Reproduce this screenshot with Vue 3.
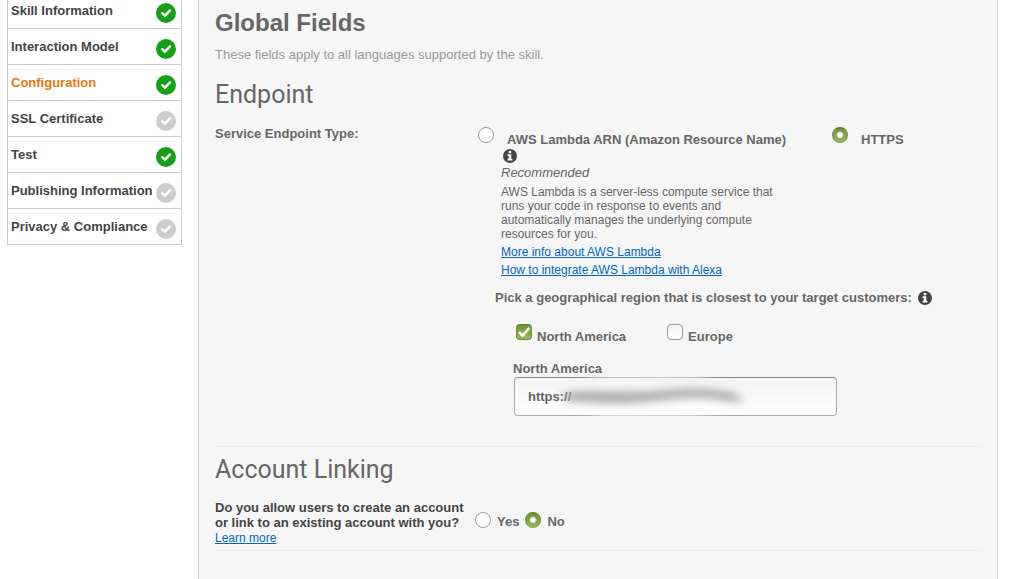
<script setup>
import { ref } from 'vue'

const steps = [
  { name: 'Skill Information', done: true },
  { name: 'Interaction Model', done: true },
  { name: 'Configuration', done: true, active: true },
  { name: 'SSL Certificate', done: false },
  { name: 'Test', done: true },
  { name: 'Publishing Information', done: false },
  { name: 'Privacy & Compliance', done: false },
]
const endpointType = ref('https')
const northAmerica = ref(true)
const europe = ref(false)
const url = ref('https://')
const linking = ref('no')
</script>

<template>
  <div class="page">
    <nav class="steps" aria-label="Skill setup">
      <ul>
        <li v-for="s in steps" :key="s.name">
          <a href="#" :class="{ active: s.active }">{{ s.name }}</a>
          <svg class="tick" :class="{ done: s.done }" viewBox="0 0 20 20" aria-hidden="true">
            <circle cx="10" cy="10" r="10" />
            <path d="M6.2 10.2 8.9 12.7 14 7.4" />
          </svg>
        </li>
      </ul>
    </nav>

    <main class="panel">
      <h1>Global Fields</h1>
      <p class="note">These fields apply to all languages supported by the skill.</p>

      <section class="endpoint">
        <h2>Endpoint</h2>
        <div class="type-row">
          <span id="type-label" class="strong">Service Endpoint Type:</span>
          <div class="types" role="radiogroup" aria-labelledby="type-label">
            <div class="type lambda">
              <input id="type-lambda" v-model="endpointType" class="radio" type="radio" name="type" value="lambda" />
              <div class="details">
                <label for="type-lambda" class="strong">AWS Lambda ARN (Amazon Resource Name)</label>
                <svg class="info" viewBox="0 0 14 14" aria-hidden="true">
                  <circle cx="7" cy="7" r="7" />
                  <path d="M5.7 2h2.6v2.3H5.7zM4.6 5.2h3.7v4.6h1.1v1.8H4.6V9.8h1.1V7H4.6z" />
                </svg>
                <em>Recommended</em>
                <p>AWS Lambda is a server-less compute service that runs your code in response to events and automatically manages the underlying compute resources for you.</p>
                <a href="#">More info about AWS Lambda</a>
                <a href="#">How to integrate AWS Lambda with Alexa</a>
              </div>
            </div>
            <div class="type">
              <input id="type-https" v-model="endpointType" class="radio" type="radio" name="type" value="https" />
              <div class="details">
                <label for="type-https" class="strong">HTTPS</label>
              </div>
            </div>
          </div>
        </div>

        <div class="region">
          <p class="strong question">
            Pick a geographical region that is closest to your target customers:
            <svg class="info" viewBox="0 0 14 14" aria-hidden="true">
              <circle cx="7" cy="7" r="7" />
              <path d="M5.7 2h2.6v2.3H5.7zM4.6 5.2h3.7v4.6h1.1v1.8H4.6V9.8h1.1V7H4.6z" />
            </svg>
          </p>
          <div class="checks">
            <div class="check">
              <span class="box">
                <input id="na" v-model="northAmerica" type="checkbox" />
                <svg v-if="northAmerica" viewBox="0 0 16 16" aria-hidden="true"><path d="M3 8 6.6 11.6 13.4 3.8" /></svg>
              </span>
              <label for="na" class="strong">North America</label>
            </div>
            <div class="check">
              <span class="box">
                <input id="eu" v-model="europe" type="checkbox" />
                <svg v-if="europe" viewBox="0 0 16 16" aria-hidden="true"><path d="M3 8 6.6 11.6 13.4 3.8" /></svg>
              </span>
              <label for="eu" class="strong">Europe</label>
            </div>
          </div>
          <div class="url">
            <label for="na-url" class="strong">North America</label>
            <div class="field">
              <input id="na-url" v-model="url" type="text" />
              <svg class="smudge" viewBox="0 0 240 44" aria-hidden="true">
                <defs>
                  <filter id="soft" x="-20%" y="-100%" width="140%" height="300%"><feGaussianBlur stdDeviation="6 4" /></filter>
                  <filter id="wide" x="-20%" y="-100%" width="140%" height="300%"><feGaussianBlur stdDeviation="10 1" /></filter>
                </defs>
                <path class="veil" filter="url(#wide)" d="M80 3L190 3.1M80 41L190 41.1" />
                <path class="ink" filter="url(#soft)" d="M50 18C80 16 110 19 140 17S195 12 224 20L228 30C200 22 170 23 140 27S80 29 52 27Z" />
              </svg>
            </div>
          </div>
        </div>
      </section>

      <section class="account">
        <h2>Account Linking</h2>
        <div class="link-row">
          <div class="ask">
            <span id="link-label">Do you allow users to create an account or link to an existing account with you?</span>
            <a href="#">Learn more</a>
          </div>
          <div class="answers" role="radiogroup" aria-labelledby="link-label">
            <input id="yes" v-model="linking" class="radio" type="radio" name="linking" value="yes" />
            <label for="yes" class="strong">Yes</label>
            <input id="no" v-model="linking" class="radio" type="radio" name="linking" value="no" />
            <label for="no" class="strong">No</label>
          </div>
        </div>
      </section>
    </main>
  </div>
</template>

<style>
body {
  background: #fff;
}
</style>

<style scoped>
.page {
  display: flex;
  align-items: flex-start;
  min-height: 100vh;
  padding: 0 12px 0 7px;
  box-sizing: border-box;
  gap: 16px;
  font: 13px/15px "Liberation Sans", Arial, sans-serif;
  color: #666;
}
h1, h2, p, ul {
  margin: 0;
  padding: 0;
}
.steps {
  flex: 0 0 175px;
  box-sizing: border-box;
  border: 1px solid #ccc;
  border-width: 0 1px;
}
.steps li {
  display: flex;
  justify-content: space-between;
  padding: 10px 5px 5px 3px;
  border-bottom: 1px solid #ccc;
}
.steps li:first-child {
  padding-top: 3px;
}
.steps a {
  color: #444;
  font-weight: bold;
  text-decoration: none;
  white-space: nowrap;
  width: 0;
}
.steps a.active {
  color: #e47911;
}
.tick {
  width: 20px;
  height: 20px;
  fill: #ccc;
}
.tick.done {
  fill: #16a016;
}
.tick path {
  fill: none;
  stroke: #fff;
  stroke-width: 2.4;
  stroke-linecap: round;
}
.panel {
  flex: 1;
  align-self: stretch;
  box-sizing: border-box;
  padding: 8px 16px 0;
  border: 1px solid #ccc;
  border-width: 0 1px;
  background: #f6f6f6;
}
h1 {
  font-size: 24px;
  line-height: 30px;
}
.note {
  margin-top: 9px;
  color: #999;
}
h2 {
  font: 25px/28px Roboto, sans-serif;
}
.strong {
  font-weight: bold;
}
.endpoint {
  padding: 19px 0 30px;
  border-bottom: 1px solid #eee;
}
.type-row {
  display: flex;
  padding-top: 17px;
}
.type-row > span {
  flex: 0 0 263px;
}
.types {
  display: flex;
  flex: 1;
}
.type {
  display: flex;
  gap: 7px;
}
.lambda {
  flex: 0 0 354px;
}
.radio {
  appearance: none;
  flex: none;
  width: 16px;
  height: 16px;
  margin: 1px 0 0;
  border: 1px solid #999;
  border-radius: 50%;
  background: #fff;
}
.radio:checked {
  border-color: #5c7c2c #6c8c3c #86a64e;
  background: radial-gradient(circle, #fff 2px, #6d8c3b66 4px, transparent 5px), linear-gradient(#728f3d, #9bb95c);
}
.details {
  display: flex;
  flex-direction: column;
  align-items: flex-start;
  padding-top: 6px;
}
.lambda .details {
  width: 290px;
}
.details label {
  margin-left: 6px;
}
.info {
  width: 14px;
  height: 14px;
  fill: #444;
}
.info path {
  fill: #fff;
}
.details .info {
  margin: 2px;
}
.details em {
  margin-bottom: 5px;
}
.details p {
  font-size: 12px;
  line-height: 14px;
  margin-bottom: 2px;
}
a {
  color: #0066c0;
}
.details a {
  font-size: 12px;
  line-height: 18px;
}
.region {
  margin: 11px 0 0 280px;
}
.question {
  display: flex;
  align-items: center;
  gap: 6px;
}
.checks {
  display: flex;
  gap: 41px;
  padding: 19px 0 0 21px;
}
.check {
  display: flex;
  gap: 5px;
}
.check label {
  padding-top: 5px;
}
.box {
  position: relative;
  width: 16px;
  height: 16px;
}
.box input {
  appearance: none;
  display: block;
  width: 16px;
  height: 16px;
  margin: 0;
  border: 1px solid #999;
  border-radius: 4px;
  background: linear-gradient(#f4f4f4, #fff);
}
.box input:checked {
  border-color: #5c7c2c #6c8c3c #6c8c3c;
  background: linear-gradient(#728f3d, #9bb95c);
}
.box svg {
  position: absolute;
  inset: 0;
  fill: none;
  stroke: #fff;
  stroke-width: 2.5;
  pointer-events: none;
}
.url {
  padding: 17px 0 0 18px;
}
.url label {
  display: block;
}
.field {
  position: relative;
  max-width: 323px;
  margin: 1px 0 0 1px;
}
.field input {
  display: block;
  width: 100%;
  height: 39px;
  box-sizing: border-box;
  padding: 0 13px;
  border: 1px solid #aaa;
  border-top-color: #888;
  border-radius: 4px;
  background: linear-gradient(#f4f4f4, #fff);
  color: #666;
  font: bold 13px "Liberation Sans", Arial, sans-serif;
}
.smudge {
  position: absolute;
  left: 0;
  top: -3px;
  width: 240px;
  height: 44px;
  pointer-events: none;
}
.veil {
  fill: none;
  stroke: #f6f6f6;
  stroke-width: 3;
  opacity: 0.7;
}
.ink {
  fill: #aaa;
}
.account {
  padding: 9px 0 4px;
  border-bottom: 1px solid #eee;
}
.link-row {
  display: flex;
  padding-top: 16px;
}
.ask {
  width: 260px;
}
.ask span {
  display: block;
  color: #444;
  font-weight: bold;
}
.ask a {
  font-size: 12px;
}
.answers {
  display: flex;
  align-items: flex-start;
  gap: 6px;
  padding-top: 11px;
}
.answers label {
  padding-top: 3px;
}
</style>
